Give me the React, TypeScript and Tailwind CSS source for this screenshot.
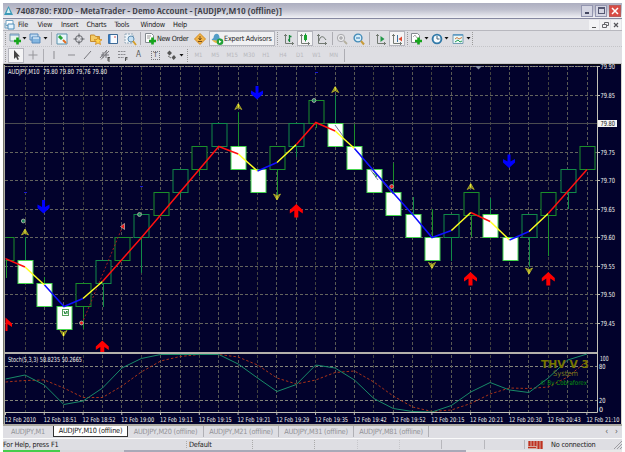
import type { ReactNode } from "react";

const UI = "font-['DejaVu_Sans_Condensed','DejaVu_Sans','Noto_Sans',sans-serif] [font-stretch:condensed]";
const STEP = 19.38;
const FIRST = 25;
const px = (i: number) => FIRST + i * STEP;

// [slot, top of body, "u" hollow | "d" filled, wick end]
const candles: [number, number, "u" | "d", number?][] = [
  [-1, 237.5, "u", 278],
  [0, 260.5, "d", 237],
  [1, 283.5, "d", 277],
  [2, 306.5, "d"],
  [3, 283.5, "u", 329],
  [4, 260.5, "u", 307],
  [5, 237.5, "u"],
  [6, 214.5, "u", 273],
  [7, 192.5, "u"],
  [8, 169.5, "u", 197],
  [9, 146.5, "u", 176],
  [10, 123.5, "u"],
  [11, 146.5, "d", 112],
  [12, 169.5, "d"],
  [13, 146.5, "u", 195],
  [14, 123.5, "u", 157],
  [15, 100.5, "u", 128],
  [16, 123.5, "d", 95],
  [17, 146.5, "d", 124],
  [18, 169.5, "d"],
  [19, 192.5, "d", 163],
  [20, 214.5, "d", 197],
  [21, 237.5, "d", 209],
  [22, 214.5, "u", 261],
  [23, 192.5, "u", 237],
  [24, 214.5, "d", 198],
  [25, 237.5, "d"],
  [26, 214.5, "u", 267],
  [27, 192.5, "u", 256],
  [28, 169.5, "u", 209],
  [29, 146.5, "u"],
];

const RED = "#ff1010";
const YEL = "#ffff20";
const BLU = "#1010ff";

const average: [string, string][] = [
  [RED, "5,258.5 25,267"],
  [YEL, "25,267 44.5,285"],
  [BLU, "44.5,285 64,306.5 83,298.5"],
  [YEL, "83,298.5 102.5,281.5"],
  [RED, "102.5,281.5 141.5,237.5 218.8,146.5 238.3,154"],
  [YEL, "238.3,154 257.5,171"],
  [BLU, "257.5,171 277,162.5"],
  [YEL, "277,162.5 296.3,144.5"],
  [RED, "296.3,144.5 315.8,122.5 335.2,131"],
  [YEL, "335.2,131 354.5,148.5"],
  [BLU, "354.5,148.5 374,171 393.3,193 412.6,214.5 432,237.5 451.4,230.5"],
  [YEL, "451.4,230.5 470.8,212.5"],
  [RED, "470.8,212.5 490.2,221.5"],
  [YEL, "490.2,221.5 509.5,240"],
  [BLU, "509.5,240 529,231.5"],
  [YEL, "529,231.5 548.2,213.5"],
  [RED, "548.2,213.5 587,169.5"],
];

const stochMain = [
  379, 375, 385, 404.5, 401, 388, 368, 358.5, 354.5, 354.5, 354.5, 354.5, 364, 378, 391.5, 384.5, 365, 368,
  380, 398.5, 408.5, 411.5, 412, 405.5, 392, 382.5, 390, 392.5, 378, 360, 354,
];
const stochSignal = [
  382, 380.5, 380, 388, 397.5, 397.5, 386, 372, 361, 356.5, 354.5, 354.5, 357, 365, 378, 384, 380, 372.5,
  371, 382, 396, 407, 411.5, 410, 403.5, 394, 388, 388.5, 387, 377, 361,
];
const toPoints = (ys: number[]) => ys.map((y, i) => `${px(i - 1)},${y}`).join(" ");

const prices: [string, number][] = [
  ["79.90", 66.5],
  ["79.85", 95.5],
  ["79.75", 152.5],
  ["79.70", 180.5],
  ["79.65", 209.5],
  ["79.60", 237.5],
  ["79.55", 266.5],
  ["79.50", 294.5],
  ["79.45", 323.5],
];

const times = [
  "12 Feb 2010",
  "12 Feb 18:51",
  "12 Feb 18:52",
  "12 Feb 19:00",
  "12 Feb 19:11",
  "12 Feb 19:15",
  "12 Feb 19:21",
  "12 Feb 19:29",
  "12 Feb 19:35",
  "12 Feb 19:42",
  "12 Feb 19:52",
  "12 Feb 20:15",
  "12 Feb 20:21",
  "12 Feb 20:30",
  "12 Feb 20:43",
  "12 Feb 21:10",
];

const UpArrow = ({ x, y }: { x: number; y: number }) => (
  <path d={`M${x} ${y}l6.500 6v3.500l-4.500-3v7h-4v-7l-4.500 3v-3.500z`} fill="#ff0000" />
);
const DownArrow = ({ x, y }: { x: number; y: number }) => (
  <path d={`M${x - 1.5} ${y}h3v7l4.500-2.500v3.500l-6 5.500l-6-5.500v-3.500l4.500 2.500z`} fill="#0000ff" />
);
const Fractal = ({ x, y, down }: { x: number; y: number; down?: boolean }) => (
  <g transform={`translate(${x} ${y})${down ? " scale(1 -1)" : ""}`}>
    <path d="M0-3L3.5 3L0 1.2L-3.5 3z" fill="#77751c" stroke="#c8c52a" strokeWidth=".7" />
    <path d="M0-2.5V1" stroke="#ffff40" strokeWidth="1" />
  </g>
);
const Dot = ({ x, y, red }: { x: number; y: number; red?: boolean }) => (
  <circle
    cx={x}
    cy={y}
    r="1.9"
    fill={red ? "#f01414" : "#188858"}
    stroke="#a4aaa2"
    strokeWidth="1"
  />
);

const Chart = () => (
  <svg
    width="619"
    height="360"
    viewBox="3 64 619 360"
    className={`block overflow-visible ${UI}`}
    fontSize="7"
    fill="none"
  >
    <defs>
      <clipPath id="plot">
        <rect x="5.5" y="65" width="592" height="287" />
      </clipPath>
    </defs>
    <rect x="3" y="64" width="619" height="360" fill="#02022c" />
    <path d="M3 64.5H622" stroke="#101010" />
    <path d="M3.5 64V424" stroke="#77776f" />
    <path d="M4.5 65V424" stroke="#b2b0a5" />
    <path d="M621.5 64V424" stroke="#d4d2cc" />

    <g stroke="#64645e" strokeDasharray="3 2">
      {prices.map(([p, y]) => (
        <path key={p} d={`M5 ${y}H597`} />
      ))}
      <path d="M5 366.5H597M5 400.5H597" stroke="#858579" />
      {candles.slice(1).map(([i]) => (
        <path
          key={i}
          d={`M${Math.floor(px(i)) + 0.5} 67V352M${Math.floor(px(i)) + 0.5} 355V412`}
          stroke={i % 3 === 0 ? "#42433f" : "#585954"}
          strokeWidth="1"
        />
      ))}
    </g>
    <path d="M5 66.5H597" stroke="#8b8b80" strokeDasharray="2 1" />
    <path d="M5 123.5H597" stroke="#4b4c50" />

    <g clipPath="url(#plot)">
      {candles.map(([i, top, kind, wick]) => {
        const x = Math.round(px(i)) + 0.5;
        const green = i % 2 ? "#1b8e2a" : "#118a48";
        return (
          <g key={i}>
            {wick && (
              <path d={`M${x} ${kind === "u" ? top + 23 : top}V${wick}`} stroke={green} />
            )}
            <rect
              x={x - 7.5}
              y={top}
              width="15"
              height="23"
              fill={kind === "u" ? "#02022c" : "#ffffff"}
              stroke={kind === "u" ? green : "#45d64d"}
            />
          </g>
        );
      })}
      <path d="M83.5 320L122 228" stroke="#a02020" strokeDasharray="2 2" />
      <path d="M335 125L343 136M355 149L393 194M370 169L378 180" stroke="#77779a" />
      {average.map(([c, pts]) => (
        <polyline key={pts} points={pts} stroke={c} strokeWidth="1.5" />
      ))}
      <rect x="62.5" y="309.5" width="6" height="6" fill="#fff" stroke="#52a05a" />
      <path d="M64 311l1 3l2-3v3" stroke="#188030" />
      <path d="M373 173l4 3l-2 1" stroke="#188840" />

      <DownArrow x={43.5} y={200} />
      <DownArrow x={257} y={86} />
      <DownArrow x={509} y={154.5} />
      <UpArrow x={5.5} y={317.5} />
      <UpArrow x={102.3} y={340.5} />
      <UpArrow x={296.3} y={204} />
      <UpArrow x={470.5} y={272} />
      <UpArrow x={548.3} y={272} />
      <Fractal x={25} y={232} />
      <Fractal x={238.3} y={106.5} />
      <Fractal x={335.2} y={89.5} />
      <Fractal x={470.7} y={186.5} />
      <Fractal x={63.5} y={333.5} down />
      <Fractal x={277} y={197} down />
      <Fractal x={432} y={265.5} down />
      <Fractal x={529} y={271} down />
      <Dot x={23.3} y={221} />
      <Dot x={139.5} y={214.5} />
      <Dot x={314} y={100.5} />
      <Dot x={81.5} y={323} red />
      <Dot x={391.7} y={186.5} red />
      <path d="M120.5 226.5l4-3v6z" fill="#f01414" stroke="#c9bcb4" strokeWidth=".7" />
      <path d="M24 192.5h3M140 186.5h3M315 72.5h3" stroke="#1818d0" />
    </g>

    <path d="M5 353H597" stroke="#b4b2ac" strokeWidth="2" />
    <polyline points={toPoints(stochSignal)} stroke="#a83218" strokeDasharray="2.5 2" />
    <polyline points={toPoints(stochMain)} stroke="#188a68" />
    <path d="M5 412.5H597.5M597.5 66V412.5" stroke="#c3c2b7" />
    <path d="M475 66h7l-3.500 3.500z" fill="#8790a0" />

    <g fill="#f2f2ee">
      <text x="8" y="73.500" textLength="99" lengthAdjust="spacingAndGlyphs" xmlSpace="preserve">
        AUDJPY,M10  79.80 79.80 79.76 79.80
      </text>
      <text x="8" y="362" textLength="74" lengthAdjust="spacingAndGlyphs">
        Stoch(5,3,3) 58.8235 50.2665
      </text>
      {prices.map(([p, y]) => (
        <g key={p}>
          <path d={`M597 ${y}h3`} stroke="#c3c2b7" />
          <text x="600.500" y={y + 2.5} textLength="14.500" lengthAdjust="spacingAndGlyphs">
            {p}
          </text>
        </g>
      ))}
      <rect x="598" y="120" width="19" height="7" fill="#f4f4f4" />
      <text x="600.500" y="126" textLength="14.500" lengthAdjust="spacingAndGlyphs" fill="#111">
        79.80
      </text>
      <text x="600" y="360.500" textLength="8.500" lengthAdjust="spacingAndGlyphs">100</text>
      <text x="599" y="368.500" textLength="6.500" lengthAdjust="spacingAndGlyphs">80</text>
      <text x="599" y="403" textLength="6.500" lengthAdjust="spacingAndGlyphs">20</text>
      <text x="599" y="411.500">0</text>
      {times.map((t, i) => (
        <g key={t} fontSize="6.500">
          <path d={`M${5.5 + i * 38.76} 412v3`} stroke="#c3c2b7" />
          <text
            x={5 + i * 38.76}
            y="421.500"
            textLength={i ? 33 : 31}
            lengthAdjust="spacingAndGlyphs"
          >
            {t}
          </text>
        </g>
      ))}
    </g>
    <text x="541" y="367.500" fontSize="10.500" fontWeight="bold" fill="#777500" textLength="48" lengthAdjust="spacingAndGlyphs">
      THV V 3
    </text>
    <text x="553" y="376" fontSize="7.500" fill="#77771d" textLength="25" lengthAdjust="spacingAndGlyphs">
      System
    </text>
    <text x="540" y="385" fontSize="6.500" fill="#08910e" textLength="47" lengthAdjust="spacingAndGlyphs">
      © By Cobraforex
    </text>
  </svg>
);

const Icon = ({ children, w = 14 }: { children: ReactNode; w?: number }) => (
  <svg width={w} height="14" viewBox={`0 0 ${w} 14`} fill="none" className="block shrink-0">
    {children}
  </svg>
);

const Slot = ({ w, on, children }: { w: string; on?: boolean; children?: ReactNode }) => (
  <div
    className={`flex h-[15px] shrink-0 items-center justify-center ${w} ${
      on ? "border border-[#b4b5bd] bg-[#f4f4f5]" : ""
    }`}
  >
    {children}
  </div>
);

const Sep = ({ dots, w = "w-[5px]" }: { dots?: boolean; w?: string }) => (
  <div className={`flex shrink-0 justify-center ${w}`}>
    <div
      className={`h-[13px] w-px ${dots ? "border-l border-dotted border-[#999]" : "bg-[#adadb3]"}`}
    />
  </div>
);

const Caret = () => (
  <svg width="5" height="3" viewBox="0 0 5 3" className="block shrink-0">
    <path d="M.5 0h4L2.500 2.500z" fill="#111" />
  </svg>
);

const Plus = () => <path d="M9.500 5.500v7M6 9h7" stroke="#16a51c" strokeWidth="2.600" />;
const Axes = () => <path d="M3.500 2v9.500H12M2 3.500h3M10.500 10v3" stroke="#737a73" />;

const StandardBar = () => (
  <div className="flex h-4 items-center border-b border-dotted border-[#c4c4c8]">
    <Sep dots />
    <Slot w="w-[13px]">
      <Icon>
        <path d="M2 2h9v7H2z" fill="#e8f5f0" stroke="#7a99a6" />
        <path d="M2 3h9" stroke="#6695c8" />
        <Plus />
      </Icon>
    </Slot>
    <Slot w="w-[7px]"><Caret /></Slot>
    <Slot w="w-[14px]">
      <Icon>
        <path d="M2 2h8v6H2z" fill="#c0dbf2" stroke="#568abd" />
        <path d="M4 5h8v6H4z" fill="#84b6e0" stroke="#568abd" />
        <path d="M5 6h6" stroke="#fff" />
      </Icon>
    </Slot>
    <Slot w="w-[7px]"><Caret /></Slot>
    <Sep w="w-[4px]" />
    <Slot w="w-[17px]">
      <Icon>
        <path d="M2 2h10v10H2z" fill="#e9f6fb" stroke="#5b92ad" />
        <path d="M4 4l3 3" stroke="#27a336" strokeWidth="3" />
        <path d="M8 8l3 3" stroke="#e06c23" strokeWidth="2" />
      </Icon>
    </Slot>
    <Slot w="w-[17px]">
      <Icon>
        <circle cx="7" cy="7" r="3.500" stroke="#63656a" />
        <path d="M7 1.500v4M7 8.500v4M1.500 7h4M8.500 7h4" stroke="#63656a" />
      </Icon>
    </Slot>
    <Slot w="w-[17px]">
      <Icon>
        <path d="M1.500 3h4l1 1.500h4v5h-9z" fill="#f4cb65" stroke="#c68c2d" />
        <path d="M9 5l1 2.500l3 .2l-2.200 1.800l.7 3L9 11l-2.500 1.500l.7-3L5 7.700l3-.2z" fill="#ffd34e" stroke="#d08a20" strokeWidth=".8" />
      </Icon>
    </Slot>
    <Slot w="w-[17px]">
      <Icon>
        <path d="M2.500 2.500h9v9h-9z" fill="#f7fbff" stroke="#3d6996" />
        <path d="M3.500 3v8" stroke="#3379c2" strokeWidth="2" />
        <path d="M9 4v2" stroke="#db5454" />
      </Icon>
    </Slot>
    <Slot w="w-[17px]">
      <Icon>
        <path d="M2 2h8v9H2z" fill="#edf3f8" stroke="#93a8b8" strokeDasharray="2 1" />
        <circle cx="8" cy="7" r="3" fill="#c5e0f4" stroke="#5b8bb0" />
        <path d="M10 9l3 4" stroke="#d6a02c" strokeWidth="1.800" />
      </Icon>
    </Slot>
    <Sep />
    <Slot w="w-[14px]">
      <Icon>
        <path d="M2.500 1.500h6l2 2v7h-8z" fill="#fff" stroke="#858b91" />
        <path d="M4 4h4M4 6h3" stroke="#999" />
        <Plus />
      </Icon>
    </Slot>
    <div className="w-[33px] shrink-0 text-[7.200px] tracking-[-0.350px] whitespace-nowrap">New Order</div>
    <Slot w="w-[19px]">
      <Icon>
        <path d="M7 1.500L12.500 7L7 12.500L1.500 7z" fill="#f1b346" stroke="#d18c27" />
        <path d="M7 4v4M5.500 6L7 8l1.500-2M5 9.500h4" stroke="#775020" />
      </Icon>
    </Slot>
    <div className="flex h-[15px] w-[66px] shrink-0 items-center border border-[#b4b5bd] bg-[#f0f0f2]">
      <Icon>
        <path d="M1.500 7.500c3 2 7 2 10 0L9.500 6c0-6-6-5-6 0z" fill="#539dc7" />
        <path d="M2 8c2 3 7 5 9 1z" fill="#e6b845" />
        <circle cx="10" cy="9.700" r="3.300" fill="#22a137" />
        <path d="M9 8l2.500 1.700L9 11.300z" fill="#fff" />
      </Icon>
      <span className="text-[7.200px] tracking-[-0.200px] whitespace-nowrap">Expert Advisors</span>
    </div>
    <Sep dots />
    <Slot w="w-[17px]">
      <Icon><Axes /><path d="M7.500 3v7M6 8h1.500M7.500 4.500h2" stroke="#16883b" strokeWidth="1.300" /></Icon>
    </Slot>
    <Slot w="w-[16px]" on>
      <Icon><Axes /><path d="M7.500 1.500v8" stroke="#16883b" /><path d="M6 3h3v5H6z" fill="#1ba52f" /></Icon>
    </Slot>
    <Slot w="w-[17px]">
      <Icon><Axes /><path d="M4 9c1-5 4-6 7-1" stroke="#697269" /></Icon>
    </Slot>
    <Sep w="w-[4px]" />
    <Slot w="w-[16px]">
      <Icon>
        <circle cx="6" cy="6" r="3.700" fill="#e8e8e9" stroke="#aaaaae" />
        <path d="M6 4v4M4 6h4" stroke="#9b9ba0" />
        <path d="M9 9l3 3" stroke="#b5b09f" strokeWidth="1.800" />
      </Icon>
    </Slot>
    <Slot w="w-[17px]">
      <Icon>
        <circle cx="6" cy="6" r="3.900" fill="#d7eef9" stroke="#448bb7" strokeWidth="1.400" />
        <path d="M4 6h4" stroke="#2873ae" />
        <path d="M9 9l3 3.500" stroke="#c89b39" strokeWidth="2" />
      </Icon>
    </Slot>
    <Sep />
    <Slot w="w-[17px]">
      <Icon><Axes /><path d="M6.500 4v6l4-3z" fill="#249849" /></Icon>
    </Slot>
    <Slot w="w-[16px]" on>
      <Icon><Axes /><path d="M7.500 3v7" stroke="#3e75a2" /><path d="M12 4.500v5L8.500 7z" fill="#df4931" /></Icon>
    </Slot>
    <Sep dots w="w-[4px]" />
    <Slot w="w-[14px]">
      <Icon>
        <path d="M2.500 1.500h6l2 2v7h-8z" fill="#fff" stroke="#858b91" />
        <path d="M4 5l2-2l2 3" stroke="#aaa" />
        <Plus />
      </Icon>
    </Slot>
    <Slot w="w-[6px]"><Caret /></Slot>
    <Slot w="w-[15px]">
      <Icon>
        <circle cx="7" cy="7" r="4.400" fill="#f6fbff" stroke="#327aa9" strokeWidth="1.900" />
        <path d="M7 4v3h2.500" stroke="#4b6372" />
      </Icon>
    </Slot>
    <Slot w="w-[5px]"><Caret /></Slot>
    <Slot w="w-[17px]">
      <Icon>
        <path d="M2 2.500h10v9H2z" fill="#e9f7f6" stroke="#769eb4" />
        <path d="M2 3h10" stroke="#5b99c4" strokeWidth="1.500" />
        <path d="M4 7l2-1.500l2 1.500l3-1.500" stroke="#ce773f" />
        <path d="M4 10l3-2l2 2l2-1" stroke="#25a054" />
      </Icon>
    </Slot>
    <Slot w="w-[4px]"><Caret /></Slot>
    <Sep dots />
  </div>
);

const StudyBar = () => (
  <div className="flex h-[17px] items-center border-b border-[#c5c5c9]">
    <Sep dots />
    <Slot w="w-[16px]" on>
      <Icon><path d="M5 2v9l2-2l1.500 3l1.500-.7L8.500 8.500H11z" fill="#444" /></Icon>
    </Slot>
    <Slot w="w-[17px]">
      <Icon><path d="M7 2.500v9M2.500 7h9" stroke="#96969b" /></Icon>
    </Slot>
    <Sep w="w-[4px]" />
    <Slot w="w-[17px]"><Icon w={10}><path d="M5 3v8" stroke="#8b8b90" /></Icon></Slot>
    <Slot w="w-[17px]"><Icon><path d="M4 7h7" stroke="#8b8b90" /></Icon></Slot>
    <Slot w="w-[17px]"><Icon><path d="M3 11L10 3" stroke="#77777c" /></Icon></Slot>
    <Slot w="w-[17px]">
      <Icon>
        <path d="M2 10L9 2M3 11.500L11 3M5 4v6M8 3v7M3 7h8" stroke="#77777c" />
        <path d="M10 9.500h2M10 9v4h2M10 11h2" stroke="#333" strokeWidth=".8" />
      </Icon>
    </Slot>
    <Slot w="w-[17px]">
      <Icon>
        <path d="M3 3.500h8M3 6.500h8M3 9.500h6" stroke="#8b8b90" strokeDasharray="2 .7" />
        <path d="M10.500 13V9.500h2M10.500 11h2" stroke="#333" strokeWidth=".8" />
      </Icon>
    </Slot>
    <Slot w="w-[17px]"><span className="text-[8px] text-[#555]">A</span></Slot>
    <Slot w="w-[17px]">
      <div className="flex h-[9px] w-[9px] items-center justify-center border border-dotted border-[#77777c] text-[7px] text-[#555]">
        T
      </div>
    </Slot>
    <Slot w="w-[14px]">
      <Icon>
        <path d="M3 5l2.500-2.500L8 5L5.500 7.500zM7.500 9.500L10 7l2 2.500L9.700 12z" fill="#555" />
        <path d="M4 8l3 2" stroke="#777" />
      </Icon>
    </Slot>
    <Slot w="w-[7px]"><Caret /></Slot>
    <Sep dots />
    <div className="flex text-[6px] text-[#b8b8bd]">
      {["M1", "M5", "M15", "M30", "H1", "H4", "D1", "W1", "MN"].map((p) => (
        <span key={p} className="w-[16.900px] text-center">{p}</span>
      ))}
    </div>
    <Sep />
  </div>
);

const tabs: [string, string][] = [
  ["AUDJPY,M1", "w-[50px]"],
  ["AUDJPY,M10 (offline)", "w-[75px]"],
  ["AUDJPY,M20 (offline)", "w-[76px]"],
  ["AUDJPY,M21 (offline)", "w-[75px]"],
  ["AUDJPY,M31 (offline)", "w-[75px]"],
  ["AUDJPY,M81 (offline)", "w-[75px]"],
];

export default function App() {
  return (
    <div className={`h-[452px] w-[625px] overflow-hidden bg-white pt-[3px] pl-[3px] leading-none text-[#222] ${UI}`}>
      <div className="flex h-[447px] w-[619px] flex-col bg-[#dedee3]">
        <div className="flex h-[15px] shrink-0 items-center bg-linear-to-b from-[#adafc0] via-[#bfc0ce] via-45% to-[#f1f1f5] pr-px">
          <Icon w={12}>
            <path d="M5.500 2L10 11H1z" fill="#3c9ab8" />
            <path d="M5.500 4l-2 5h4z" fill="#d8f3f5" />
          </Icon>
          <svg width="267" height="13" className="ml-px block overflow-visible" fill="#3a3b44">
            <text
              x="0"
              y="10"
              textLength="266"
              lengthAdjust="spacingAndGlyphs"
              className="font-['Open_Sans','Noto_Sans',sans-serif] text-[9.500px] font-semibold"
            >
              7408780: FXDD - MetaTrader - Demo Account - [AUDJPY,M10 (offline)]
            </text>
          </svg>
          <div className="ml-auto flex gap-[2px]">
            <div className="flex h-3 w-3 items-end justify-center border border-[#9496b0] bg-[#d4d5e2] pb-[2px]">
              <div className="h-[2px] w-1 bg-[#444760]" />
            </div>
            <div className="flex h-3 w-3 items-center justify-center border border-[#9496b0] bg-[#d4d5e2]">
              <div className="h-[7px] w-[7px] border border-t-2 border-[#555873]" />
            </div>
            <div className="flex h-3 w-3 items-center justify-center border border-[#b85b5b] bg-[#d84c45]">
              <svg width="8" height="8" viewBox="0 0 8 8">
                <path d="M1 1l6 6M7 1L1 7" stroke="#fff" strokeWidth="1.500" />
              </svg>
            </div>
          </div>
        </div>

        <div className="flex h-[13px] shrink-0 items-center border-t border-b border-t-[#8688a0] border-b-[#b7b7be] bg-[#e4e4e8] text-[7.300px] tracking-[-0.250px]">
          <div className="w-[15px]">
            <Icon w={13}>
              <path d="M3 2.500h7v5H3z" fill="#fff" stroke="#75a4c2" />
              <path d="M5 6h6v5H5z" fill="#e6f5ff" stroke="#4c8cb8" />
              <path d="M2 5v5h3" stroke="#75a4c2" />
            </Icon>
          </div>
          <span className="w-[19.500px]">File</span>
          <span className="w-[23.500px]">View</span>
          <span className="w-[25.500px]">Insert</span>
          <span className="w-[28px]">Charts</span>
          <span className="w-[26px]">Tools</span>
          <span className="w-[32.500px]">Window</span>
          <span>Help</span>
          <div className="ml-auto flex gap-px">
            <div className="flex h-[10px] w-[10px] items-end justify-center bg-[#f3f3f5] pb-[2px]">
              <div className="h-px w-1 bg-[#555]" />
            </div>
            <div className="h-[10px] w-[10px] bg-[#f3f3f5]">
              <svg width="10" height="10" viewBox="0 0 10 10" fill="none" stroke="#66666b">
                <path d="M4.500 4V2.500h4v3H7M2.500 4.500h4v3h-4z" />
              </svg>
            </div>
            <div className="mr-px h-[10px] w-[10px] bg-[#f3f3f5]">
              <svg width="10" height="10" viewBox="0 0 10 10" fill="none" stroke="#55555a">
                <path d="M3 3l4 4M7 3L3 7" strokeWidth="1.200" />
              </svg>
            </div>
          </div>
        </div>

        <StandardBar />
        <StudyBar />
        <div className="h-[360px] shrink-0">
          <Chart />
        </div>

        <div className="flex h-[14px] shrink-0 items-start border-t-2 border-[#aaa89f] text-[7.300px] text-[#929297]">
          {tabs.map(([label, w], i) => (
            <div
              key={label}
              className={`flex h-[11px] shrink-0 items-center justify-center whitespace-nowrap tracking-[-0.220px] ${w} ${
                i === 1
                  ? "border-x border-b border-[#333] bg-white text-[#222]"
                  : i > 1
                    ? "border-r border-[#b0b0b5]"
                    : ""
              }`}
            >
              {label}
            </div>
          ))}
          <div className="mr-1 ml-auto flex h-[11px] items-center gap-[7px] text-[8px] text-[#555]">
            <span>‹</span>
            <span>›</span>
          </div>
        </div>
        <div className="flex h-[12px] shrink-0 items-center border-t border-[#fafafa] text-[7.300px] tracking-[-0.200px]">
          <div className="w-[183px]">For Help, press F1</div>
          <div className="w-[66px] border-l border-dotted border-[#aaa] pl-[2px]">Default</div>
          <div className="h-[9px] w-[62px] border-l border-dotted border-[#aaa]" />
          <div className="h-[9px] w-[43px] border-l border-dotted border-[#aaa]" />
          <div className="h-[9px] w-[42px] border-l border-dotted border-[#c6c6ca]" />
          <div className="h-[9px] w-[42px] border-l border-dotted border-[#c6c6ca]" />
          <div className="h-[9px] w-[43px] border-l border-[#b7b7bc]" />
          <div className="h-[9px] w-[40px] border-l border-[#b7b7bc]" />
          <div className="flex h-[9px] w-[27px] items-center border-l border-[#b7b7bc] pl-[3px]">
            <svg width="15" height="8" viewBox="0 0 15 8">
              <path d="M0 0h15v8H0z" fill="#d5a99d" />
              <path d="M1.500 0v5M4.500 0v5M7.500 0v5M10.500 0v8M13.500 0v8" stroke="#be3021" strokeWidth="2" />
              <path d="M0 6.500h8" stroke="#be3021" />
            </svg>
          </div>
          <span className="whitespace-nowrap">No connection</span>
          <svg width="9" height="9" viewBox="0 0 9 9" className="ml-auto">
            <path d="M1 9L9 1M4 9L9 4M7 9l2-2" stroke="#9d9da2" />
          </svg>
        </div>
      </div>
      <div className="flex h-[2px] w-[619px]">
        <div className="w-[57px] bg-[#45cd4c]" />
        <div className="w-[64px] bg-[#d8d8dc]" />
        <div className="w-[342px] bg-[#a9a9b8]" />
        <div className="flex-1 bg-[#e8e8e8]" />
      </div>
    </div>
  );
}
